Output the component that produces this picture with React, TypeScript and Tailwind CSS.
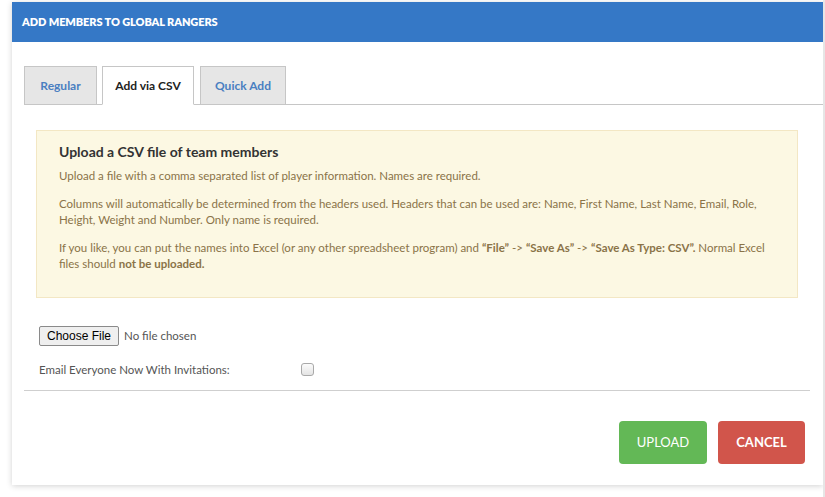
import { useState } from 'react';

const TABS = ['Regular', 'Add via CSV', 'Quick Add'] as const;
type Tab = (typeof TABS)[number];

const TAB_WIDTHS: Record<Tab, string> = {
  Regular: 'w-[73px]',
  'Add via CSV': 'w-[92px]',
  'Quick Add': 'w-[86px]',
};

export default function App() {
  const [tab, setTab] = useState<Tab>('Add via CSV');
  const [emailAll, setEmailAll] = useState(false);

  return (
    <div className="flex h-[497px] w-full bg-white font-['Lato',sans-serif]">
      <div className="w-[12px]" />
      <div className="flex-1 pt-[2px]">
        <div className="flex h-[483px] flex-col bg-white shadow-[0_1px_6px_rgba(0,0,0,0.18)]">
          <div className="flex h-[40px] items-center bg-[#3578c6] px-[10px]">
            <h1 className="text-[11px] font-extrabold tracking-[-0.1px] text-white uppercase">Add members to Global Rangers</h1>
          </div>

          <div className="flex flex-1 flex-col pl-3 pr-[13px]">
            <div className="mt-[24px] -mr-[13px] flex gap-[5px] border-b border-[#c6c6c6]">
              {TABS.map((t) => (
                <button
                  key={t}
                  onClick={() => setTab(t)}
                  className={`-mb-px flex h-[39px] items-center justify-center border border-[#c6c6c6] text-[12px] font-bold ${TAB_WIDTHS[t]} ${
                    tab === t ? 'border-b-white bg-white text-[#222]' : 'bg-[#e6e6e6] text-[#4a7fc1]'
                  } ${t === 'Quick Add' ? 'ml-px' : ''}`}
                >
                  {t}
                </button>
              ))}
            </div>

            <div className="px-3">
              <div className="mt-[25px] h-[168px] border border-[#f3e7c4] bg-[#fcf8e3] px-[22px] pt-[11px]">
                <h2 className="text-[14px] leading-[20px] font-bold text-[#333]">Upload a CSV file of team members</h2>
                <div className="mt-[6px] space-y-[11px] text-[11.5px] leading-[16.5px] text-[#8a7348]">
                  <p>Upload a file with a comma separated list of player information. Names are required.</p>
                  <p>
                    Columns will automatically be determined from the headers used. Headers that can be used are: Name, First Name, Last Name, Email, Role,
                    <br />
                    Height, Weight and Number. Only name is required.
                  </p>
                  <p>
                    If you like, you can put the names into Excel (or any other spreadsheet program) and <b>“File”</b> -&gt; <b>“Save As”</b> -&gt;{' '}
                    <b>“Save As Type: CSV”.</b> Normal Excel
                    <br />
                    files should <b>not be uploaded.</b>
                  </p>
                </div>
              </div>

              <div className="mt-[28px] ml-[3px] flex items-center gap-[5px]">
                <span className="flex h-[20px] items-center rounded-[2px] border border-[#8a8a8a] bg-[#efefef] px-[7px] font-['Liberation_Sans',sans-serif] text-[12px] text-black">
                  Choose File
                </span>
                <span className="text-[11.5px] text-[#555]">No file chosen</span>
              </div>

              <div className="mt-[15px] ml-[3px] flex items-center">
                <span className="w-[262px] text-[11.5px] text-[#555]">Email Everyone Now With Invitations:</span>
                <button
                  onClick={() => setEmailAll(!emailAll)}
                  className="flex h-[13px] w-[13px] items-center justify-center rounded-[3px] border border-[#a9a9a9] bg-gradient-to-b from-[#fbfbfb] to-[#e4e4e4]"
                >
                  {emailAll && <span className="text-[10px] leading-none text-[#333]">✓</span>}
                </button>
              </div>
            </div>

            <div className="mt-[12px] border-t border-[#cfcfcf]" />

            <div className="mt-[30px] flex justify-end gap-[11px] pr-[5px]">
              <button className="h-[43px] w-[88px] rounded-[4px] bg-[#63b856] text-[13px] text-white uppercase">Upload</button>
              <button className="h-[43px] w-[87px] rounded-[4px] bg-[#d1554b] text-[13px] font-bold text-white uppercase">Cancel</button>
            </div>
          </div>
        </div>
      </div>
      <div className="w-[2px] bg-[#e6e6e6]" />
    </div>
  );
}
